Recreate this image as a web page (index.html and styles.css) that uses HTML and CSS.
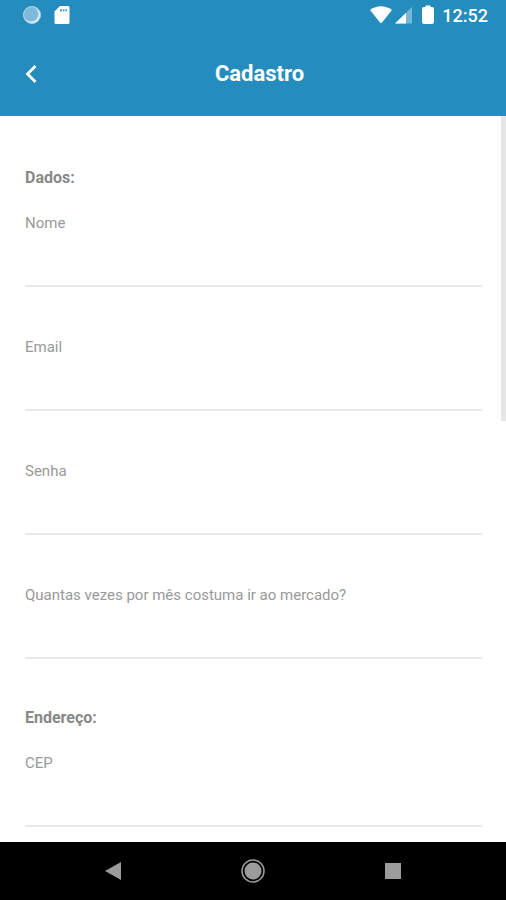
FILE: index.html
```html
<!DOCTYPE html>
<html lang="pt-BR">
<head>
<meta charset="utf-8">
<meta name="viewport" content="width=device-width, initial-scale=1">
<title>Cadastro</title>
<link rel="stylesheet" href="styles.css">
</head>
<body>
<header class="header">
  <div class="status">
    <svg class="status-icon" width="20" height="20" viewBox="0 0 20 20" aria-hidden="true"><circle cx="10" cy="10" r="8.500" fill="#d9edf7"/><circle cx="9" cy="9" r="7.500" fill="#7fbadb"/><circle cx="10" cy="10" r="8.500" fill="none" stroke="#a9d2e7"/></svg>
    <svg class="status-icon" width="16" height="20" viewBox="0 0 16 20" aria-hidden="true"><path d="M6 1H14Q15.500 1 15.500 2.500V17.500Q15.500 19 14 19H2Q.5 19 .5 17.500V6.500Z" fill="#fff"/><path d="M6 4h2v2.500H6zM9 4h1.500v2.500H9zM11.500 4H13v2.500h-1.500z" fill="#5aa8cd"/></svg>
    <div class="status-right">
      <svg width="22" height="18" viewBox="0 0 22 18" aria-hidden="true"><path d="M0 4Q11-3.500 22 4L12 16.500Q11 17.500 10 16.500Z" fill="#fff"/></svg>
      <svg width="18" height="18" viewBox="0 0 18 18" aria-hidden="true"><path d="M17 1V17.500H0Z" fill="#76b7d7"/><path d="M11 7V17.500H0Z" fill="#fff"/></svg>
      <svg class="battery" width="12" height="20" viewBox="0 0 12 20" aria-hidden="true"><path d="M3.500 2V.5H8.500V2H10Q12 2 12 4V17Q12 19 10 19H2Q0 19 0 17V4Q0 2 2 2Z" fill="#fff"/></svg>
      <span class="clock">12:52</span>
    </div>
  </div>
  <div class="titlebar">
    <button class="back" type="button" aria-label="Voltar"><svg width="12" height="20" viewBox="0 0 12 20" aria-hidden="true"><path d="M10.500 2L2.500 10L10.500 18" fill="none" stroke="#fff" stroke-width="2.800"/></svg></button>
    <h1 class="title">Cadastro</h1>
  </div>
</header>
<main class="content">
  <form class="form">
    <fieldset class="group">
      <legend class="heading">Dados:</legend>
      <div class="field"><label for="nome">Nome</label><input id="nome" type="text"></div>
      <div class="field"><label for="email">Email</label><input id="email" type="email"></div>
      <div class="field"><label for="senha">Senha</label><input id="senha" type="password"></div>
      <div class="field"><label for="vezes">Quantas vezes por mês costuma ir ao mercado?</label><input id="vezes" type="text"></div>
    </fieldset>
    <fieldset class="group">
      <legend class="heading">Endereço:</legend>
      <div class="field"><label for="cep">CEP</label><input id="cep" type="text"></div>
    </fieldset>
  </form>
  <div class="scroll-thumb"></div>
</main>
<nav class="nav">
  <button type="button" aria-label="Voltar"><svg width="24" height="24" viewBox="0 0 24 24" aria-hidden="true"><path d="M4 12L20 3V21Z" fill="#9b9b9b"/></svg></button>
  <button type="button" aria-label="Início"><svg width="24" height="24" viewBox="0 0 24 24" aria-hidden="true"><circle cx="12" cy="12" r="11" fill="none" stroke="#9b9b9b" stroke-width="1.500"/><circle cx="12" cy="12" r="8.500" fill="#9b9b9b"/></svg></button>
  <button type="button" aria-label="Recentes"><svg width="24" height="24" viewBox="0 0 24 24" aria-hidden="true"><path d="M4 4H20V20H4Z" fill="#9b9b9b"/></svg></button>
</nav>
</body>
</html>
```
FILE: styles.css
```css
* { box-sizing: border-box; }

body {
  margin: 0;
  height: 100vh;
  display: flex;
  flex-direction: column;
  overflow: hidden;
  background: #fff;
  font-family: Roboto, "Liberation Sans", sans-serif;
}

button {
  padding: 0;
  border: 0;
  background: none;
}

svg { display: block; }

.header {
  flex: none;
  background: #258dbd;
  color: #fff;
}

.status {
  display: flex;
  align-items: center;
  gap: 12px;
  height: 32px;
  padding: 0 18px 2px 22px;
}

.status-right {
  display: flex;
  align-items: center;
  gap: 3px;
  margin-left: auto;
}

.battery { margin: 0 5px 0 6px; }

.clock {
  font-size: 18px;
  font-weight: 500;
  line-height: 24px;
  padding-top: 2px;
}

.titlebar {
  display: grid;
  grid-template-columns: 40px 1fr 40px;
  align-items: center;
  height: 84px;
  padding: 0 12px 0 25px;
}

.back { justify-self: start; }

.title {
  margin: 0;
  font-size: 22px;
  line-height: 28px;
  font-weight: 700;
  text-align: center;
}

.content {
  position: relative;
  flex: 1;
  min-height: 0;
  overflow: hidden;
}

.form { padding: 50px 24px 0 25px; }

.group {
  min-width: 0;
  margin: 0;
  padding: 0;
  border: 0;
}

.heading {
  padding: 0;
  margin-bottom: 23px;
  color: #888;
  font-size: 16px;
  line-height: 24px;
  font-weight: 700;
}

.field {
  display: flex;
  flex-direction: column;
  margin-bottom: 50px;
}

.field:last-child { margin-bottom: 47px; }

.field label {
  color: #999;
  font-size: 15px;
  line-height: 20px;
}

.field input {
  width: 100%;
  height: 54px;
  padding: 20px 0 0;
  border: 0;
  border-bottom: 2px solid #e9e9e9;
  border-radius: 0;
  outline: 0;
  background: none;
  color: #555;
  font: inherit;
}

.scroll-thumb {
  position: absolute;
  top: 0;
  right: 0;
  width: 5px;
  height: 42%;
  background: #e6e6e6;
}

.nav {
  flex: none;
  display: flex;
  align-items: center;
  justify-content: center;
  gap: 116px;
  height: 58px;
  background: #000;
}
```
